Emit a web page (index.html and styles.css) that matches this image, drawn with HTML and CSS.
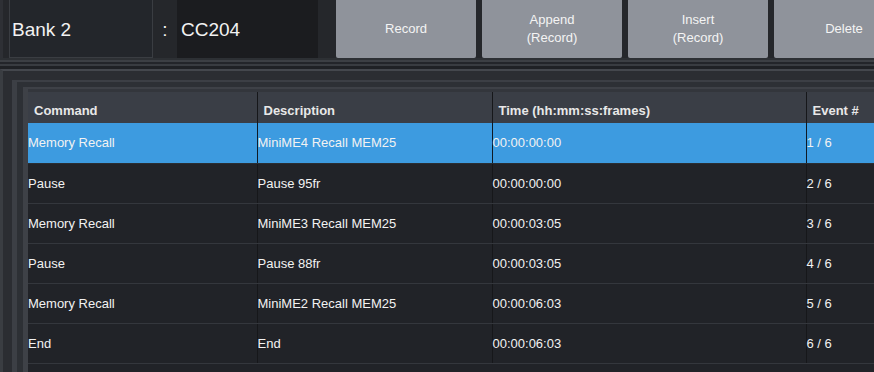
FILE: index.html
```html
<!DOCTYPE html>
<html>
<head>
<meta charset="utf-8">
<link rel="stylesheet" href="styles.css">
</head>
<body>
<div class="top">
  <div class="bank">Bank 2</div>
  <div class="colon">:</div>
  <div class="macro">CC204</div>
  <div class="buttons">
    <div class="btn">Record</div>
    <div class="btn">Append<br>(Record)</div>
    <div class="btn">Insert<br>(Record)</div>
    <div class="btn">Delete</div>
  </div>
</div>
<div class="sep"></div>
<div class="panel">
  <div class="frame1">
    <div class="frame2">
      <table class="events">
        <colgroup>
          <col class="c1"><col class="c2"><col class="c3"><col class="c4">
        </colgroup>
        <thead>
          <tr><th>Command</th><th>Description</th><th>Time (hh:mm:ss:frames)</th><th>Event #</th></tr>
        </thead>
        <tbody>
          <tr class="sel"><td>Memory Recall</td><td>MiniME4 Recall MEM25</td><td>00:00:00:00</td><td>1 / 6</td></tr>
          <tr><td>Pause</td><td>Pause 95fr</td><td>00:00:00:00</td><td>2 / 6</td></tr>
          <tr><td>Memory Recall</td><td>MiniME3 Recall MEM25</td><td>00:00:03:05</td><td>3 / 6</td></tr>
          <tr><td>Pause</td><td>Pause 88fr</td><td>00:00:03:05</td><td>4 / 6</td></tr>
          <tr><td>Memory Recall</td><td>MiniME2 Recall MEM25</td><td>00:00:06:03</td><td>5 / 6</td></tr>
          <tr><td>End</td><td>End</td><td>00:00:06:03</td><td>6 / 6</td></tr>
        </tbody>
      </table>
    </div>
  </div>
</div>
</body>
</html>
```

FILE: styles.css
```css
html, body {
  margin: 0;
  padding: 0;
  width: 874px;
  height: 372px;
  overflow: hidden;
  background: #24262b;
  font-family: "Liberation Sans", Arial, sans-serif;
  color: #f2f2f2;
}

.top {
  display: flex;
  height: 58px;
  width: 874px;
  overflow: hidden;
  background: #25272b;
  border-left: 3px solid #2e3035;
  box-sizing: border-box;
  padding-left: 6px;
}

.bank {
  flex: none;
  width: 144px;
  box-sizing: border-box;
  border-left: 1px solid #3a3d42;
  border-right: 1px solid #3a3d42;
  border-bottom: 1px solid #3a3d42;
  background: #23262b;
  font-size: 19px;
  padding-left: 2px;
  display: flex;
  align-items: center;
  padding-top: 2px;
}

.colon {
  flex: none;
  width: 24px;
  font-size: 19px;
  display: flex;
  align-items: center;
  justify-content: center;
  padding-top: 2px;
}

.macro {
  flex: none;
  width: 141px;
  background: #1b1c1f;
  font-size: 19px;
  display: flex;
  align-items: center;
  padding-left: 4px;
  padding-top: 2px;
  box-sizing: border-box;
}

.buttons {
  display: flex;
  gap: 6px;
  margin-left: 18px;
  flex: none;
}

.btn {
  width: 140px;
  height: 58px;
  background: #8f939b;
  color: #f4f4f4;
  font-size: 13px;
  line-height: 18px;
  display: flex;
  align-items: center;
  justify-content: center;
  text-align: center;
  flex: none;
  border-radius: 0 0 2px 2px;
}

.sep {
  height: 11px;
  background: linear-gradient(to bottom,
    #2d3034 0, #2d3034 2px,
    #3c3f44 2px, #3c3f44 4px,
    #23252a 4px, #23252a 6px,
    #393c41 6px, #393c41 8px,
    #1f2125 8px, #1f2125 11px);
}

.panel {
  height: 303px;
  box-sizing: border-box;
  background: #2b2d32;
  border-top: 2px solid #44474d;
  border-left: 3px solid #3a3d42;
  padding: 9px 0 0 9px;
  overflow: hidden;
}

.frame1 {
  height: 100%;
  box-sizing: border-box;
  background: #2d3035;
  border-top: 2px solid #3c3f45;
  border-left: 5px solid #3c3f45;
  padding: 5px 0 0 6px;
}

.frame2 {
  height: 100%;
  box-sizing: border-box;
  background: #212328;
  border-top: 2px solid #3e4147;
  border-left: 5px solid #3e4147;
  padding-top: 3px;
  overflow: hidden;
  box-shadow: inset 0 3px 0 #33363c;
}

.events {
  border-collapse: collapse;
  table-layout: fixed;
  width: 900px;
  font-size: 13px;
}

.c1 { width: 229px; }
.c2 { width: 235px; }
.c3 { width: 314px; }
.c4 { width: 122px; }

.events th {
  background: #3a3e46;
  color: #e8e8e8;
  font-weight: bold;
  text-align: left;
  height: 31px;
  padding: 5px 0 0 6px;
  box-sizing: border-box;
  border-right: 1px solid #16171a;
}

.events td {
  height: 40px;
  box-sizing: border-box;
  padding: 0;
  background: #212328;
  border-bottom: 1px solid #34373d;
  border-right: 1px solid #16171a;
  white-space: nowrap;
}

.events tr.sel td {
  background: #3d9be0;
  border-bottom-color: #2b2e33;
  border-right-color: #0f1a24;
}
```
